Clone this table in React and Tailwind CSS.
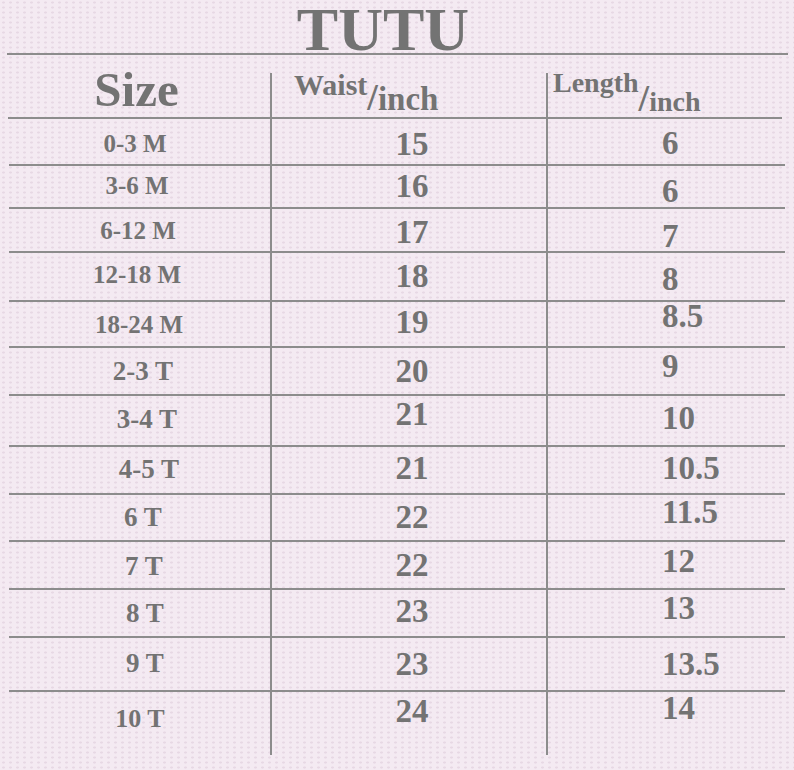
import React from 'react';

const rows = [
  { size: '0-3 M', waist: '15', length: '6', h: 'h-[45px]', s: 'text-[25px] pl-[0px] translate-y-[2px]', w: 'translate-y-[3px]', l: 'translate-y-[2px]' },
  { size: '3-6 M', waist: '16', length: '6', h: 'h-[41px]', s: 'text-[25px] pl-[4px] -translate-y-[1px]', w: 'translate-y-[0px]', l: 'translate-y-[5px]' },
  { size: '6-12 M', waist: '17', length: '7', h: 'h-[42px]', s: 'text-[25px] pl-[6px]', w: 'translate-y-[2px]', l: 'translate-y-[6px]' },
  { size: '12-18 M', waist: '18', length: '8', h: 'h-[47px]', s: 'text-[25px] pl-[4px] -translate-y-[2px]', w: 'translate-y-[0px]', l: 'translate-y-[3px]' },
  { size: '18-24 M', waist: '19', length: '8.5', h: 'h-[44px]', s: 'text-[25px] pl-[8px]', w: '-translate-y-[2px]', l: '-translate-y-[8px]' },
  { size: '2-3 T', waist: '20', length: '9', h: 'h-[46px]', s: 'text-[27px] pl-[16px]', w: 'translate-y-[0px]', l: '-translate-y-[5px]' },
  { size: '3-4 T', waist: '21', length: '10', h: 'h-[49px]', s: 'text-[27px] pl-[24px] -translate-y-[1px]', w: '-translate-y-[6px]', l: '-translate-y-[2px]' },
  { size: '4-5 T', waist: '21', length: '10.5', h: 'h-[46px]', s: 'text-[27px] pl-[28px] -translate-y-[1px]', w: '-translate-y-[2px]', l: '-translate-y-[2px]' },
  { size: '6 T', waist: '22', length: '11.5', h: 'h-[45px]', s: 'text-[27px] pl-[16px]', w: 'translate-y-[0px]', l: '-translate-y-[5px]' },
  { size: '7 T', waist: '22', length: '12', h: 'h-[46px]', s: 'text-[27px] pl-[18px] translate-y-[1px]', w: 'translate-y-[0px]', l: '-translate-y-[4px]' },
  { size: '8 T', waist: '23', length: '13', h: 'h-[46px]', s: 'text-[27px] pl-[20px]', w: '-translate-y-[2px]', l: '-translate-y-[5px]' },
  { size: '9 T', waist: '23', length: '13.5', h: 'h-[52px]', s: 'text-[27px] pl-[20px] -translate-y-[1px]', w: 'translate-y-[0px]', l: 'translate-y-[0px]' },
  { size: '10 T', waist: '24', length: '14', h: 'h-[63px]', s: 'text-[26px] pl-[10px] -translate-y-[5px]', w: '-translate-y-[12px]', l: '-translate-y-[15px]' },
];

const Line = ({ className }) => <div className={`h-[2px] bg-[#8c8c8c] ${className}`}></div>;

const App = () => {
  return (
    <div className="w-[794px] h-[770px] overflow-hidden bg-[#f4eaf2] bg-[image:radial-gradient(ellipse_at_center,#e7d8e4_1px,transparent_2px)] bg-[length:7px_5px] font-['Liberation_Serif',serif] font-bold text-[#737373]">
      <div className="h-[58px] pr-[28px] text-center text-[62px] leading-[58px]">TUTU</div>
      <Line className="-mt-[5px] ml-[7px] mr-[6px]" />

      {/* header */}
      <div className="grid grid-cols-[270px_276px_1fr] h-[62px]">
        <div className="flex justify-center pt-[10px] pl-[3px] text-[49px] leading-none">Size</div>
        <div className="mt-[18px] border-l-2 border-[#8c8c8c]">
          <div className="-mt-[5px] pl-[22px] whitespace-nowrap leading-none">
            <span className="text-[30px]">Waist</span>
            <span className="inline-block translate-y-[15px] text-[33px]">
              <span className="text-[38px] leading-[0]">/</span>inch
            </span>
          </div>
        </div>
        <div className="mt-[18px] border-l-2 border-[#8c8c8c]">
          <div className="-mt-[4px] pl-[5px] whitespace-nowrap leading-none">
            <span className="text-[28px]">Length</span>
            <span className="inline-block translate-y-[19px] text-[28px]">
              <span className="text-[38px] leading-[0]">/</span>inch
            </span>
          </div>
        </div>
      </div>
      <Line className="ml-[8px] mr-[12px]" />

      {rows.map((r, i) => (
        <div key={r.size}>
          <div className={`grid grid-cols-[270px_276px_1fr] ${r.h}`}>
            <div className="flex items-center justify-center">
              <span className={`leading-none whitespace-nowrap ${r.s}`}>{r.size}</span>
            </div>
            <div className="flex items-center justify-center pl-[6px] border-l-2 border-[#8c8c8c]">
              <span className={`text-[33px] leading-none ${r.w}`}>{r.waist}</span>
            </div>
            <div className="flex items-center pl-[114px] border-l-2 border-[#8c8c8c]">
              <span className={`text-[33px] leading-none ${r.l}`}>{r.length}</span>
            </div>
          </div>
          {i < rows.length - 1 && <Line className="mx-[9px]" />}
        </div>
      ))}
    </div>
  );
};

export default App;
